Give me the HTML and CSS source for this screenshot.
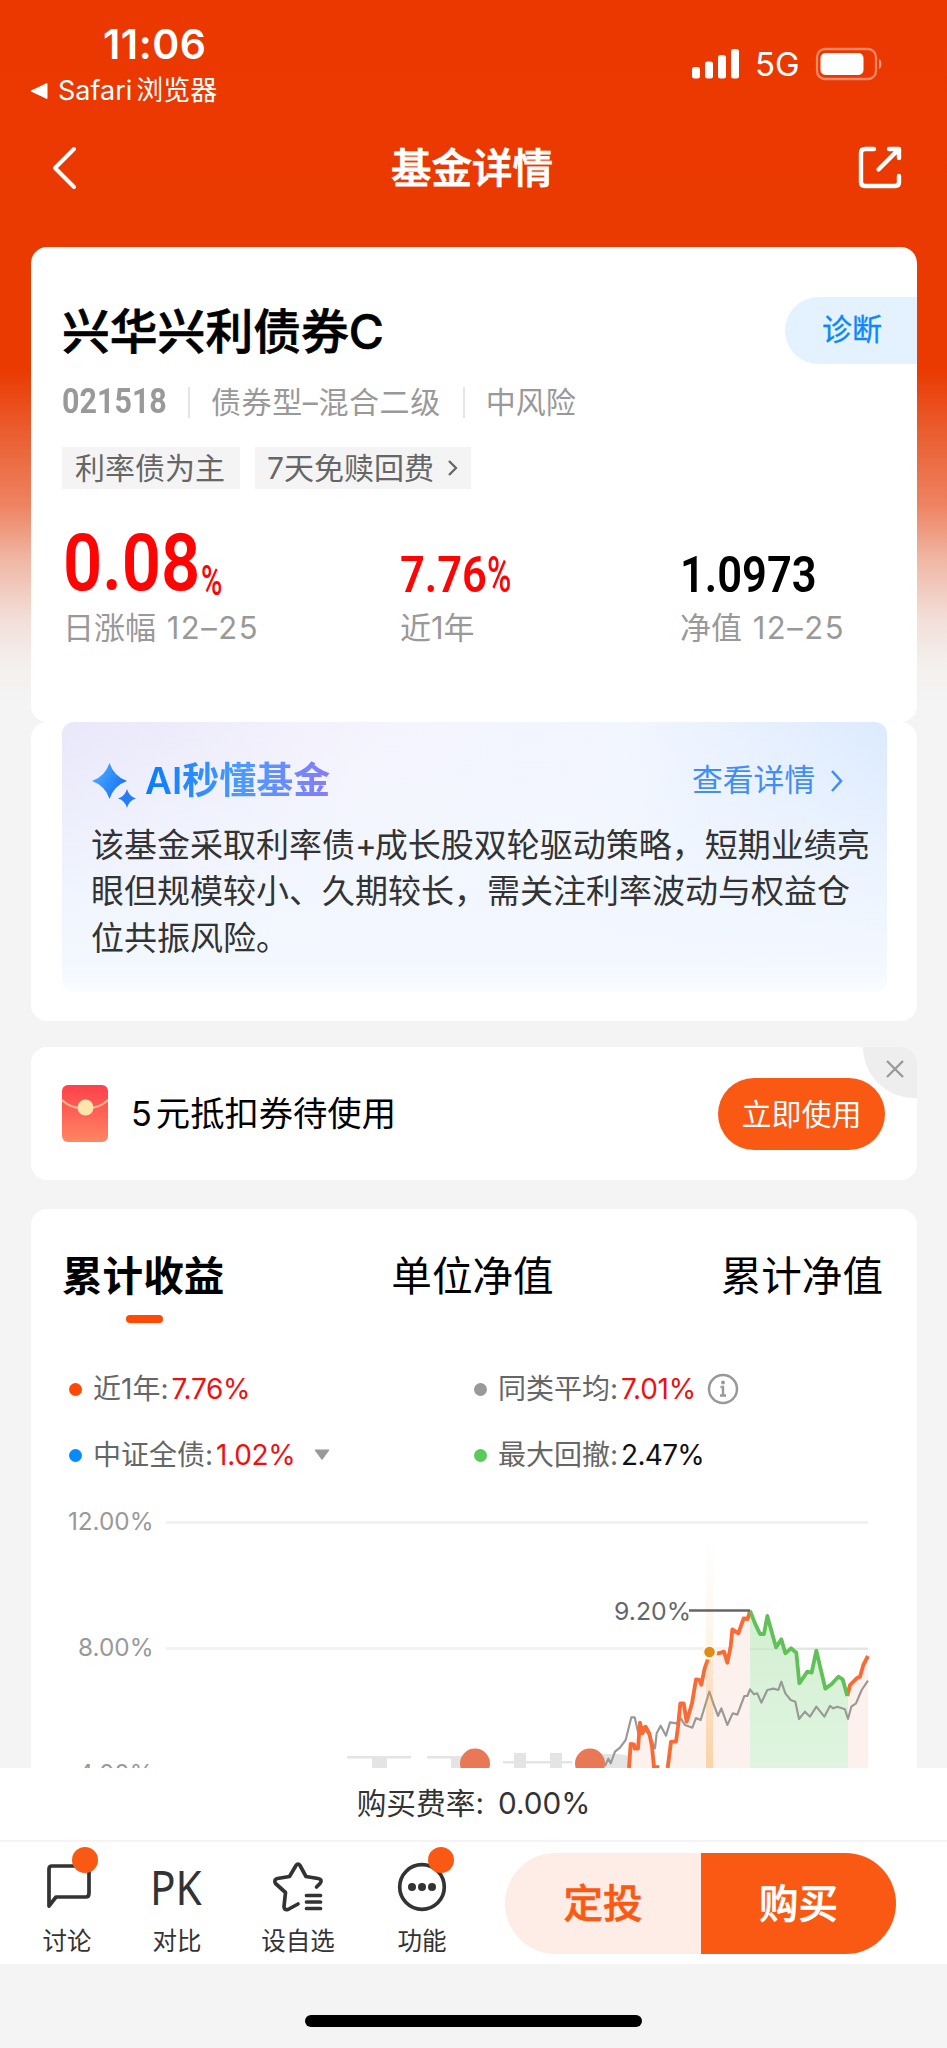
FILE: index.html
```html
<!DOCTYPE html>
<html lang="zh-CN">
<head>
<meta charset="utf-8">
<title>基金详情</title>
<link rel="stylesheet" href="styles.css">
</head>
<body>
<div class="phone">
  <header class="status">
    <div class="status-left">
      <div class="clock">11:06</div>
      <div class="back-app"><svg width="18" height="18" viewBox="0 0 18 18"><path d="M1 9 17 1.5v15z" fill="#fff" stroke="#fff" stroke-linejoin="round"/></svg><span class="safari">Safari</span><span>浏览器</span></div>
    </div>
    <div class="status-right">
      <svg class="signal" width="48" height="32" viewBox="0 0 48 32" fill="#fff"><rect y="19" width="8" height="11.500" rx="2.500"/><rect x="13" y="13.500" width="8" height="17" rx="2.500"/><rect x="26" y="7" width="8" height="23.500" rx="2.500"/><rect x="39" y="1" width="8" height="29.500" rx="2.500"/></svg>
      <span class="net">5G</span>
      <svg width="68" height="34" viewBox="0 0 68 34"><rect x="2" y="2" width="59" height="30" rx="8" fill="none" stroke="#fff" stroke-opacity=".4" stroke-width="2.300"/><rect x="5.500" y="6" width="43" height="22" rx="5" fill="#fff"/><path d="M64 12c3.200 1 3.200 9 0 10z" fill="#fff" fill-opacity=".5"/></svg>
    </div>
  </header>
  <nav class="nav">
    <svg width="28" height="46" viewBox="0 0 28 46"><path d="M24 4 5 23l19 19" fill="none" stroke="#fff" stroke-width="4" stroke-linecap="round" stroke-linejoin="round"/></svg>
    <h1>基金详情</h1>
    <svg width="46" height="46" viewBox="0 0 46 46" fill="none" stroke="#fff" stroke-width="4.400" stroke-linecap="round" stroke-linejoin="round"><path d="M17 4H8Q4 4 4 8v29q0 4 4 4h30q4 0 4-4v-6M32 4h10v9M41 5 21.500 24.500"/></svg>
  </nav>

  <main class="main">
    <section class="card summary">
      <div class="name-row"><h2>兴华兴利债券C</h2><a class="diagnose">诊断</a></div>
      <div class="meta"><b class="code"><span>021518</span></b><i></i><span class="type">债券型–混合二级</span><i></i><span>中风险</span></div>
      <div class="tags"><span class="tag">利率债为主</span><span class="tag fee">7天免赎回费<svg width="12" height="18" viewBox="0 0 12 18"><path d="m2 2 7 7-7 7" fill="none" stroke="#666" stroke-width="2.300"/></svg></span></div>
      <div class="figures">
        <div class="figure"><div class="value red"><span class="big">0.08</span><span class="unit">%</span></div><div class="caption">日涨幅 <span>12–25</span></div></div>
        <div class="figure"><div class="value red"><span class="mid">7.76</span><span class="mid-unit">%</span></div><div class="caption">近1年</div></div>
        <div class="figure"><div class="value"><span class="mid">1.0973</span></div><div class="caption">净值 <span>12–25</span></div></div>
      </div>
    </section>
    <section class="card ai-card">
      <div class="ai">
        <div class="ai-head">
          <svg width="46" height="48" viewBox="0 0 46 48"><defs><linearGradient id="spark" x2="1" y2=".6"><stop stop-color="#55b4ff"/><stop offset="1" stop-color="#1673f5"/></linearGradient></defs><path fill="url(#spark)" d="M18.500 2Q23 15.500 36 20 23 24.500 18.500 38 14 24.500 1 20 14 15.500 18.500 2z"/><path fill="#247df5" d="M36 28q2 7.500 9 9.500-7 2-9 9.500-2-7.500-9-9.500 7-2 9-9.500z"/></svg>
          <h3>AI秒懂基金</h3>
          <span class="more">查看详情</span>
          <svg class="more-arrow" width="14" height="24" viewBox="0 0 14 24"><path d="m2 2 9 10-9 10" fill="none" stroke="#428df5" stroke-width="2.600"/></svg>
        </div>
        <p>该基金采取利率债<span class="plus">+</span>成长股双轮驱动策略，短期业绩亮<br>眼但规模较小、久期较长，需关注利率波动与权益仓<br>位共振风险。</p>
      </div>
    </section>
    <section class="card coupon">
      <svg width="46" height="57" viewBox="0 0 46 57"><defs><linearGradient id="packet" x2="0" y2="1"><stop stop-color="#ff404b"/><stop offset="1" stop-color="#ff8663"/></linearGradient></defs><rect width="46" height="57" rx="6" fill="url(#packet)"/><path d="M0 15q8 8 23 9 15-1 23-9" fill="none" stroke="#ffb391" stroke-width="2"/><circle cx="23.500" cy="22.500" r="8" fill="#ffe5ac"/></svg>
      <span class="coupon-text"><span>5</span>元抵扣券待使用</span>
      <button class="use">立即使用</button>
      <span class="close"><svg width="20" height="20" viewBox="0 0 20 20"><path d="m2 2 16 16M18 2 2 18" stroke="#999" stroke-width="2.300"/></svg></span>
    </section>
    <section class="card performance">
      <div class="tabs"><span class="active">累计收益</span><span>单位净值</span><span>累计净值</span></div>
      <div class="legend">
        <div><i class="dot orange"></i><span>近1年:</span><em>7.76%</em></div>
        <div><i class="dot gray"></i><span>同类平均:</span><em>7.01%</em><svg class="info" width="32" height="32" viewBox="0 0 32 32"><circle cx="16" cy="16" r="14" fill="none" stroke="#999" stroke-width="2.500"/><circle cx="16" cy="9.500" r="2" fill="#999"/><path d="M13.500 14H16v8.500m-3 0h6" fill="none" stroke="#999" stroke-width="2.400"/></svg></div>
        <div><i class="dot blue"></i><span>中证全债:</span><em>1.02%</em><svg class="caret" width="18" height="12" viewBox="0 0 18 12"><path d="M2 1h14L9 10.500z" fill="#999" stroke="#999" stroke-linejoin="round"/></svg></div>
        <div><i class="dot green"></i><span>最大回撤:</span><em class="dark">2.47%</em></div>
      </div>
      <svg class="chart" width="886" height="278" viewBox="31 1490 886 278">
        <defs>
          <linearGradient id="fall" x2="0" y2="1"><stop stop-color="#d2f0d1"/><stop offset="1" stop-color="#e0f4e0"/></linearGradient>
          <linearGradient id="beam" x2="0" y2="1"><stop stop-color="#f7a63c" stop-opacity="0"/><stop offset=".4" stop-color="#f7a63c" stop-opacity=".1"/><stop offset="1" stop-color="#f7a63c" stop-opacity=".4"/></linearGradient>
        </defs>
        <g class="axis"><text x="153.500" y="1530">12.00%</text><text x="153.500" y="1655.500">8.00%</text><text x="153.500" y="1782">4.00%</text></g>
        <path d="M166 1522.500h702M166 1648.500h702" stroke="#f0f0f0" stroke-width="2.300"/>
        <g fill="#e4e4e4"><path d="M347 1756h64v2.500h-64zM427 1756h40v2.500h-40zM372 1758h15v10h-15zM451 1758h15v10h-15zM503 1761h69v2.500h-69zM514 1753h12v15h-12zM550 1753h12v15h-12z"/><path d="M600 1754h17q19 1 27 14h-44z"/></g>
        <circle cx="475" cy="1763.500" r="15" fill="#e97856"/><circle cx="590" cy="1763.500" r="15" fill="#e97856"/>
        <g transform="translate(560 1560) scale(.33333)" fill="none" stroke-linejoin="round">
          <path fill="#fdf1ed" d="M207 624l5-72 10 1 2 13 10 0 6-78 7 32 10-20 11 20 8 40 6 64zM323 624l10-79h15l6-45 7-70h10l9 55 16-55 12-72 10 2 6 14 10-49 9-25 5-23 27 3 17-5 10 33 10-48 5-52 18 12 16-45 12 2 7-25v472zM862 624V408l8-33 20-20 10-5 10-35 14-27v336z"/>
          <path fill="url(#fall)" d="M570 152l15 38 15 32h12l10-54 26 94 16-24 12 42 17-15 16 13 9 92 24-35 13 3 14-66 27 114 19-14 20-22 13 8 16 50v216H570z"/>
          <path d="M570 267h354" stroke="#cbd6ca" stroke-opacity=".4" stroke-width="6"/>
          <path stroke="#999a98" stroke-width="6.500" d="M135 618l10-22 7 14 13-35 15-12 17-23 17-68 10 0 11 48 15-20 20 30 15 35 5-45 12-23 16 30 12-40 20 3 12-15 13 20 22 8 11-29 14 6 26-85 12 35 14 38 10-23 18 50 16-35 14 4 21-56h9l8-20 12 15 10-3 12 28 18-38 18-4 15 4 9-25 12 35 16 20 14 5 11 52 18-22 15 15 19-30 24 30 17-32 10 7 12-5 23 8 9 29 10-37 14-10 17-40 19-28"/>
          <path stroke="#fa6a34" stroke-width="11.500" d="M207 624l5-72 10 1 2 13h10l6-78 7 32 10-20 11 20 8 40 6 62 16-1M323 624l10-79h15l6-45 7-70h10l9 55 16-55 12-72 10 2 6 14 10-49 9-25 5-23 27 3 17-5 10 33 10-48 5-52 18 12 16-45 12 2 7-25M862 408l8-33 20-20 10-5 10-35 14-27"/>
          <path stroke="#61c158" stroke-width="11.500" d="M570 152l15 38 15 32h12l10-54 26 94 16-24 12 42 17-15 16 13 9 92 24-35 13 3 14-66 27 114 19-14 20-22 13 8 14 50"/>
        </g>
        <path fill="url(#beam)" d="M706 1540h7v228h-7z"/>
        <circle cx="709.500" cy="1652" r="6.500" fill="#e28b16" stroke="#fff8e8" stroke-width="2.500"/>
        <path d="M689 1610.500h61" stroke="#666" stroke-width="2.300"/><text class="peak" x="614" y="1620">9.20%</text>
      </svg>
    </section>
  </main>

  <div class="fee-bar"><span>购买费率:</span><span class="rate">0.00%</span></div>
  <footer class="toolbar">
    <div class="tool t1"><div class="icon"><svg width="52" height="56" viewBox="0 0 52 56" fill="none" stroke="#333" stroke-width="3.700" stroke-linejoin="round"><path d="M8 11q0-3 3-3h34q3 0 3 3v24q0 4-3 4H15l-7 9z"/></svg><b class="badge"></b></div><span>讨论</span></div>
    <div class="tool t2"><div class="icon pk">PK</div><span>对比</span></div>
    <div class="tool t3"><div class="icon"><svg width="54" height="56" viewBox="0 0 54 56" fill="none" stroke="#333" stroke-width="3.700" stroke-linecap="round" stroke-linejoin="round"><path d="M27 46 17 51.500q-4 1-4-3l1.500-14-10-9q-2-4 2-5l12-2 6.500-11q2-3 4 0l6 11 12 2q5 1 2 5l-3.500 3.500M35.500 37.500h14M35.500 44h14M35.500 50.500h14"/></svg></div><span>设自选</span></div>
    <div class="tool t4"><div class="icon"><svg width="50" height="56" viewBox="0 0 50 56"><circle cx="25" cy="29" r="22.300" fill="none" stroke="#333" stroke-width="3.700"/><g fill="#333"><circle cx="15" cy="29" r="4"/><circle cx="25" cy="29" r="4"/><circle cx="35" cy="29" r="4"/></g></svg><b class="badge"></b></div><span>功能</span></div>
    <div class="actions"><button class="plan">定投</button><button class="buy">购买</button></div>
  </footer>
  <div class="home"><i></i></div>
</div>
</body>
</html>
```

FILE: styles.css
```css
* { box-sizing: border-box; }
body { margin: 0; font-family: Inter, "Noto Sans CJK SC", sans-serif; color: #000; }
h1, h2, h3, p { margin: 0; }
button { border: 0; padding: 0; font: inherit; }
svg { display: block; flex: none; }
i, em { font-style: normal; }

.phone { width: 947px; height: 2048px; overflow: hidden; display: flex; flex-direction: column; white-space: nowrap;
  background: linear-gradient(#ea3800 0, #ea3a02 370px, #ea5c2e 430px, #ee8361 505px, #f0b7a5 560px, #f3dfd9 620px, #f4f0ee 665px, #f4f4f4 700px); }

.status { height: 122px; flex: none; display: flex; color: #fff; }
.status-left { width: 690px; padding: 23px 0 0 30px; }
.clock { padding-left: 73px; height: 42px; line-height: 42px; font-size: 41px; font-weight: 600; letter-spacing: .5px; }
.back-app { display: flex; align-items: center; height: 51px; font-size: 27px; line-height: 50px; }
.safari { margin: 0 4px 0 10px; }
.status-right { display: flex; align-items: center; height: 127px; padding-left: 2px; }
.net { width: 60px; margin-left: 15px; font-size: 33px; line-height: 40px; }

.nav { height: 125px; flex: none; display: flex; justify-content: space-between; padding: 23px 44px 0 50px; color: #fff; }
.nav h1 { font-size: 40.500px; line-height: 48px; font-weight: 500; padding-left: 9px; -webkit-text-stroke: .8px #fff; }

.main { flex: none; height: 1521px; padding: 0 30px 0 31px; overflow: hidden; }
.card { background: #fff; border-radius: 16px; }
.summary { height: 475px; padding: 48px 0 0 31px; }
.name-row { display: flex; justify-content: space-between; height: 72px; }
.name-row h2 { font-size: 47.800px; line-height: 74px; font-weight: 500; -webkit-text-stroke: .7px #000; }
.diagnose { width: 132px; height: 67px; margin-top: 2px; padding-left: 37px; border-radius: 34px 0 0 34px; background: #e4f2ff; color: #0d87fb; font-size: 30px; line-height: 65px; -webkit-text-stroke: .3px #0d87fb; }
.meta { display: flex; align-items: center; height: 42px; margin-top: 14px; color: #999; font-size: 30px; line-height: 42px; }
.meta i { width: 2px; height: 31px; margin: 0 21px 0 22px; background: #e5e5e5; }
.type { letter-spacing: .6px; }
.code { width: 104px; font: 700 35px/42px Roboto; }
.code span { display: block; transform: scaleX(.87); transform-origin: left; }
.tags { display: flex; gap: 15px; margin-top: 24px; }
.tag { display: flex; align-items: center; justify-content: space-between; width: 178px; height: 42px; padding: 0 13px; font-size: 30px; line-height: 42px; color: #666; background: #f4f4f4; }
.fee { width: 216px; padding: 0 12px; }
.figures { display: grid; grid-template-columns: 337px 280px 1fr; margin: 37px 0 0 1px; }
.value { display: flex; height: 77px; align-items: baseline; font-family: Roboto, sans-serif; font-weight: 500; }
.red { color: #fe0505; }
.value span { transform-origin: left; transform: scaleX(.87); }
.value .big { width: 138px; font-size: 79px; line-height: 75px; font-weight: 600; }
.value .unit { font-size: 42px; transform: translateY(5px) scaleX(.69); }
.mid { font-size: 50px; line-height: 98px; font-weight: 600; }
.value .mid-unit { font-size: 50px; margin-left: -13px; transform: scaleX(.66); }
.caption { height: 50px; font-size: 31px; line-height: 50px; color: #999; }
.caption span { letter-spacing: 1.500px; margin-left: 2px; }

.ai-card { height: 299px; padding: 0 30px 0 31px; }
.ai { height: 270px; border-radius: 12px; padding: 39px 0 0 29px;
  background: linear-gradient(transparent 0, rgba(242,247,255,.85) 65%, #f3f8ff 90%, #fafdff 100%), linear-gradient(100deg, #e9e7fa 0, #f5f4fd 35%, #f2f6ff 65%, #d8e8fe 100%); }
.ai-head { display: flex; height: 48px; }
.ai-head h3 { margin: -4px 0 0 8px; width: 189px; font-size: 37px; line-height: 48px; font-weight: 600; color: transparent; background: linear-gradient(90deg, #087bfd, #499bff 50%, #8a7bf7); -webkit-background-clip: text; background-clip: text; }
.more { margin-left: 358px; font-size: 30.800px; line-height: 38px; color: #428df5; }
.more-arrow { margin: 8px 0 0 15px; }
.ai p { padding-top: 13px; font-size: 33px; line-height: 46.300px; color: #333; }
.plus { letter-spacing: -2px; }

.coupon { position: relative; height: 133px; margin-top: 26px; padding: 0 32px 0 31px; display: flex; align-items: center; overflow: hidden; }
.coupon-text { margin-left: 23px; font-size: 34.300px; line-height: 50px; }
.coupon-text span { margin-right: 4px; }
.use { width: 167px; height: 72px; margin-left: auto; border-radius: 36px; background: #fa5914; color: #fff; font-size: 30px; line-height: 70px; }
.close { position: absolute; right: 0; top: 0; width: 54px; height: 51px; padding: 12px 0 0 22px; border-radius: 0 0 0 51px; background: #eee; }

.performance { height: 600px; margin-top: 29px; }
.tabs { display: flex; justify-content: space-between; height: 134px; padding: 43px 34px 0 31px; font-size: 40.600px; line-height: 50px; }
.active { font-weight: 700; }
.active::after { content: ""; display: block; width: 37px; height: 8px; margin: 13px 0 0 64px; border-radius: 4px; background: #ff4907; }
.legend { display: grid; grid-template-columns: 405px 1fr; grid-auto-rows: 66px; height: 147px; padding: 13px 0 0 38px; font-size: 28px; color: #666; }
.legend div { display: flex; align-items: center; line-height: 40px; }
.dot { width: 13px; height: 13px; margin-right: 11px; border-radius: 50%; }
.orange { background: #ff4907; } .gray { background: #999; } .blue { background: #098afb; } .green { background: #57cc58; }
.legend em { margin-left: 3px; letter-spacing: -.3px; color: #ef1010; }
.legend .dark { color: #111; letter-spacing: -.7px; }
.info { margin-left: 11px; }
.caret { margin-left: 17px; }
.axis text { font-size: 24.300px; fill: #999; text-anchor: end; }
.peak { font-size: 24.800px; fill: #666; }

.fee-bar { flex: none; height: 72px; display: flex; justify-content: center; padding: 10px 0 0; background: #fff; color: #333; font-size: 29.700px; line-height: 50px; }
.rate { margin-left: 14px; }
.toolbar { flex: none; height: 124px; display: flex; border-top: 2px solid #f4f4f6; background: #fff; color: #333; }
.tool { display: flex; flex-direction: column; align-items: center; padding-top: 16px; font-size: 24.500px; line-height: 36px; }
.icon { position: relative; height: 65px; }
.t1 { width: 50px; margin-left: 42px; }
.t2 { width: 60px; margin-left: 55px; }
.t3 { width: 74px; margin-left: 54px; }
.t4 { width: 50px; margin-left: 62px; }
.pk { font: 400 47px/58px "Noto Sans"; transform: translateX(-1px) scaleX(.9); }
.badge { position: absolute; width: 26px; height: 26px; right: -7px; top: -11px; border-radius: 50%; background: #fa5914; }
.t1 .badge { right: -5px; }
.actions { display: flex; width: 391px; height: 101px; margin: 11px 0 0 58px; border-radius: 51px; overflow: hidden; font-size: 39.500px; line-height: 100px; }
.plan { width: 196px; background: #fdede6; color: #fa5914; font-weight: 500; -webkit-text-stroke: .6px #fa5914; }
.buy { width: 195px; background: #fa5914; color: #fff; font-weight: 500; -webkit-text-stroke: .6px #fff; }
.home { flex: 1; background: #f4f4f4; }
.home i { display: block; width: 337px; height: 12px; margin: 51px auto 0; border-radius: 6px; background: #000; }
```
